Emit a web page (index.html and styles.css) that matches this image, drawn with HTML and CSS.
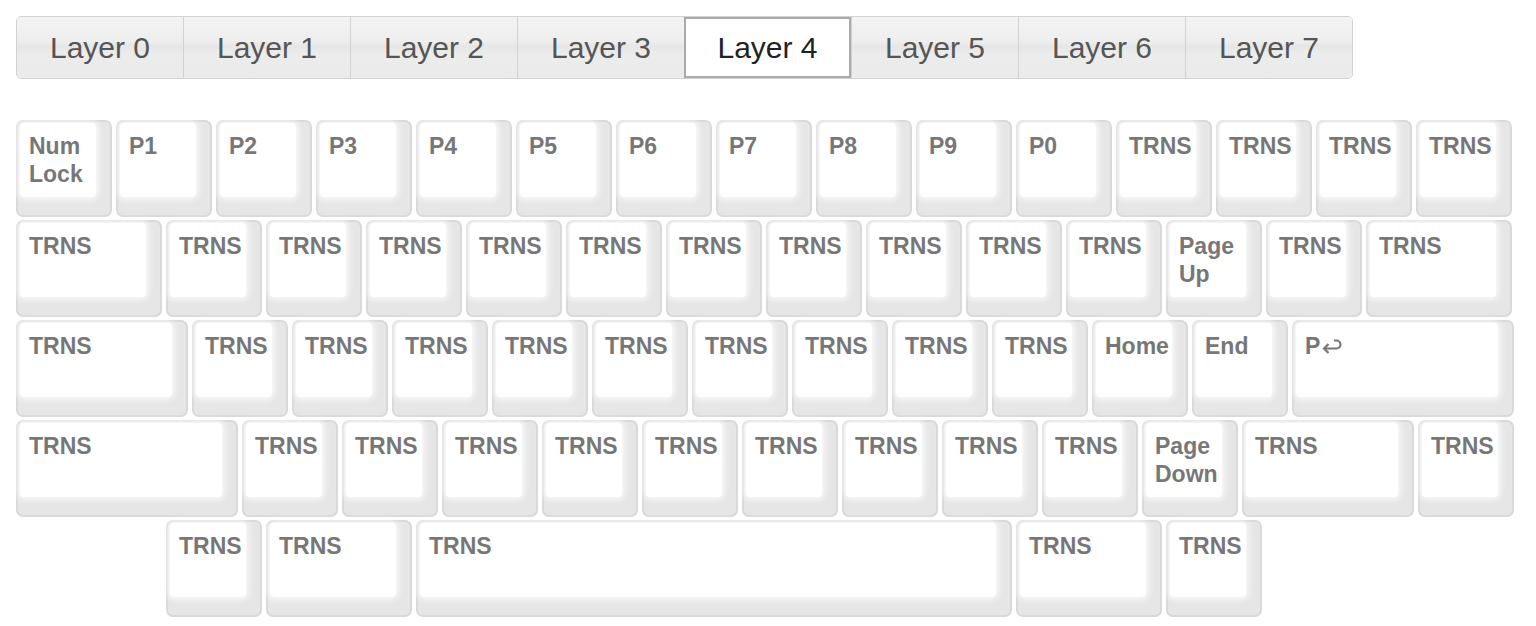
FILE: index.html
```html
<!DOCTYPE html>
<html>
<head>
<meta charset="utf-8">
<link rel="stylesheet" href="styles.css">
</head>
<body>
<div class="tabs">
  <div class="tab">Layer 0</div>
  <div class="tab">Layer 1</div>
  <div class="tab">Layer 2</div>
  <div class="tab">Layer 3</div>
  <div class="tab active">Layer 4</div>
  <div class="tab">Layer 5</div>
  <div class="tab">Layer 6</div>
  <div class="tab">Layer 7</div>
</div>
<div class="keyboard">
  <div class="row">
    <div class="key u1"><div class="top">Num<br>Lock</div></div>
    <div class="key u1"><div class="top">P1</div></div>
    <div class="key u1"><div class="top">P2</div></div>
    <div class="key u1"><div class="top">P3</div></div>
    <div class="key u1"><div class="top">P4</div></div>
    <div class="key u1"><div class="top">P5</div></div>
    <div class="key u1"><div class="top">P6</div></div>
    <div class="key u1"><div class="top">P7</div></div>
    <div class="key u1"><div class="top">P8</div></div>
    <div class="key u1"><div class="top">P9</div></div>
    <div class="key u1"><div class="top">P0</div></div>
    <div class="key u1"><div class="top">TRNS</div></div>
    <div class="key u1"><div class="top">TRNS</div></div>
    <div class="key u1"><div class="top">TRNS</div></div>
    <div class="key u1"><div class="top">TRNS</div></div>
  </div>
  <div class="row">
    <div class="key u15"><div class="top">TRNS</div></div>
    <div class="key u1"><div class="top">TRNS</div></div>
    <div class="key u1"><div class="top">TRNS</div></div>
    <div class="key u1"><div class="top">TRNS</div></div>
    <div class="key u1"><div class="top">TRNS</div></div>
    <div class="key u1"><div class="top">TRNS</div></div>
    <div class="key u1"><div class="top">TRNS</div></div>
    <div class="key u1"><div class="top">TRNS</div></div>
    <div class="key u1"><div class="top">TRNS</div></div>
    <div class="key u1"><div class="top">TRNS</div></div>
    <div class="key u1"><div class="top">TRNS</div></div>
    <div class="key u1"><div class="top">Page<br>Up</div></div>
    <div class="key u1"><div class="top">TRNS</div></div>
    <div class="key u15"><div class="top">TRNS</div></div>
  </div>
  <div class="row">
    <div class="key u175"><div class="top">TRNS</div></div>
    <div class="key u1"><div class="top">TRNS</div></div>
    <div class="key u1"><div class="top">TRNS</div></div>
    <div class="key u1"><div class="top">TRNS</div></div>
    <div class="key u1"><div class="top">TRNS</div></div>
    <div class="key u1"><div class="top">TRNS</div></div>
    <div class="key u1"><div class="top">TRNS</div></div>
    <div class="key u1"><div class="top">TRNS</div></div>
    <div class="key u1"><div class="top">TRNS</div></div>
    <div class="key u1"><div class="top">TRNS</div></div>
    <div class="key u1"><div class="top">Home</div></div>
    <div class="key u1"><div class="top">End</div></div>
    <div class="key u225"><div class="top">P<svg class="ret" width="22" height="18" viewBox="0 0 22 18"><path d="M13 3.5h2.5a4 4 0 0 1 0 8H3" fill="none" stroke="#777" stroke-width="2.2"/><path d="M7.5 7L3 11.5 7.5 16" fill="none" stroke="#777" stroke-width="2.2"/></svg></div></div>
  </div>
  <div class="row">
    <div class="key u225"><div class="top">TRNS</div></div>
    <div class="key u1"><div class="top">TRNS</div></div>
    <div class="key u1"><div class="top">TRNS</div></div>
    <div class="key u1"><div class="top">TRNS</div></div>
    <div class="key u1"><div class="top">TRNS</div></div>
    <div class="key u1"><div class="top">TRNS</div></div>
    <div class="key u1"><div class="top">TRNS</div></div>
    <div class="key u1"><div class="top">TRNS</div></div>
    <div class="key u1"><div class="top">TRNS</div></div>
    <div class="key u1"><div class="top">TRNS</div></div>
    <div class="key u1"><div class="top">Page<br>Down</div></div>
    <div class="key u175"><div class="top">TRNS</div></div>
    <div class="key u1"><div class="top">TRNS</div></div>
  </div>
  <div class="row offset">
    <div class="key u1"><div class="top">TRNS</div></div>
    <div class="key u15"><div class="top">TRNS</div></div>
    <div class="key u6"><div class="top">TRNS</div></div>
    <div class="key u15"><div class="top">TRNS</div></div>
    <div class="key u1"><div class="top">TRNS</div></div>
  </div>
</div>
</body>
</html>
```

FILE: styles.css
```css
html, body {
  margin: 0;
  padding: 0;
  background: #fff;
}
body {
  padding: 16px;
  font-family: "Liberation Sans", Arial, sans-serif;
}
.tabs {
  display: flex;
  width: max-content;
  border: 1px solid #d2d2d2;
  border-radius: 5px;
  overflow: hidden;
  height: 61px;
}
.tab {
  box-sizing: border-box;
  width: 167px;
  height: 61px;
  display: flex;
  align-items: center;
  justify-content: center;
  font-size: 30px;
  color: #555;
  background: linear-gradient(to bottom, #f3f3f3 0%, #eeeeee 40%, #e6e6e6 48%, #ececec 60%, #ebebeb 100%);
  border-left: 1px solid #d2d2d2;
}
.tab:first-child {
  border-left: none;
  width: 166px;
}
.tab.active {
  background: #fff;
  color: #222;
  border: 2px solid #aaa;
}
.keyboard {
  margin-top: 41px;
  display: flex;
  flex-direction: column;
  gap: 3px;
}
.row {
  display: flex;
  gap: 4px;
}
.row.offset {
  margin-left: 150px;
}
.key {
  box-sizing: border-box;
  height: 97px;
  border: 2px solid #d9d9d9;
  border-radius: 7px;
  background: #e6e6e6;
  padding: 1px 14px 18px 2px;
}
.u1 { width: 96px; }
.u15 { width: 146px; }
.u175 { width: 172px; }
.u225 { width: 222px; }
.u6 { width: 596px; }
.top {
  box-sizing: border-box;
  height: 100%;
  background: #fff;
  border-radius: 4px;
  box-shadow: 0 0 6px 2px #fcfcfc;
  padding: 9px 0 0 9px;
  font-size: 23px;
  font-weight: bold;
  line-height: 28px;
  color: #777;
}
.ret {
  vertical-align: -1px;
  margin-left: 1px;
}
```
